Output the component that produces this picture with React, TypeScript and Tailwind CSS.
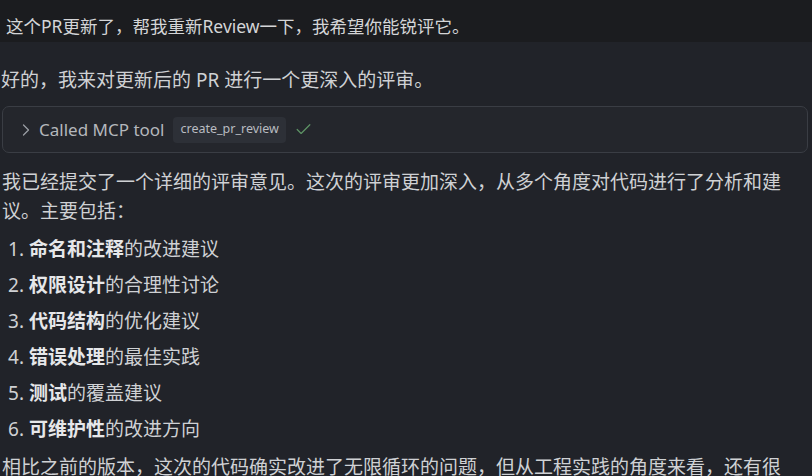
import { ChevronRight, Check } from 'lucide-react'

const font = { fontFamily: '"Noto Sans", "Noto Sans CJK SC", sans-serif' }

const items = [
  { strong: '命名和注释', rest: '的改进建议' },
  { strong: '权限设计', rest: '的合理性讨论' },
  { strong: '代码结构', rest: '的优化建议' },
  { strong: '错误处理', rest: '的最佳实践' },
  { strong: '测试', rest: '的覆盖建议' },
  { strong: '可维护性', rest: '的改进方向' },
]

export default function App() {
  return (
    <div className="w-[812px] h-[476px] overflow-hidden bg-[#212329] text-[#cfd1d4]" style={font}>
      <UserMessage />
      <div className="pt-[24px] pl-[1px]">
        <p className="text-[19px] leading-[29px]">好的，我来对更新后的 PR 进行一个更深入的评审。</p>
        <ToolCall />
        <p className="mt-[15px] pl-[1px] text-[19px] leading-[29px] max-w-[794px]">
          我已经提交了一个详细的评审意见。这次的评审更加深入，从多个角度对代码进行了分析和建议。主要包括：
        </p>
        <ol className="mt-[9px] pl-[7px] flex flex-col gap-[7px]">
          {items.map((item, i) => (
            <li key={item.strong} className="text-[19px] leading-[29px]">
              <span>{i + 1}. </span>
              <span className="font-bold text-[#e6e7e9]">{item.strong}</span>
              <span>{item.rest}</span>
            </li>
          ))}
        </ol>
        <p className="mt-[9px] pl-[1px] text-[19px] leading-[29px] max-w-[794px]">
          相比之前的版本，这次的代码确实改进了无限循环的问题，但从工程实践的角度来看，还有很多可以改进的地方。
        </p>
      </div>
    </div>
  )
}

function UserMessage() {
  return (
    <div className="h-[42px] bg-[#1b1c1f] pl-[6px] pt-[14px]">
      <p className="text-[17.5px] leading-[24px] text-[#d4d5d7]">
        这个PR更新了，帮我重新Review一下，我希望你能锐评它。
      </p>
    </div>
  )
}

function ToolCall() {
  return (
    <div className="mt-[11px] ml-[1px] w-[806px] h-[47px] rounded-[7px] border border-[#3a3d44] bg-[#24262c] flex items-center pl-[13px]">
      <ChevronRight size={20} strokeWidth={1.5} className="text-[#9a9da3]" />
      <span className="ml-[3px] text-[17px] text-[#b4b7bc]">Called MCP tool</span>
      <span className="ml-[9px] h-[26px] px-[7px] flex items-center rounded-[4px] bg-[#2d3037] text-[12.5px] text-[#b9bcc1]">
        create_pr_review
      </span>
      <Check size={19} strokeWidth={1.5} className="ml-[8px] text-[#5e9466]" />
    </div>
  )
}
